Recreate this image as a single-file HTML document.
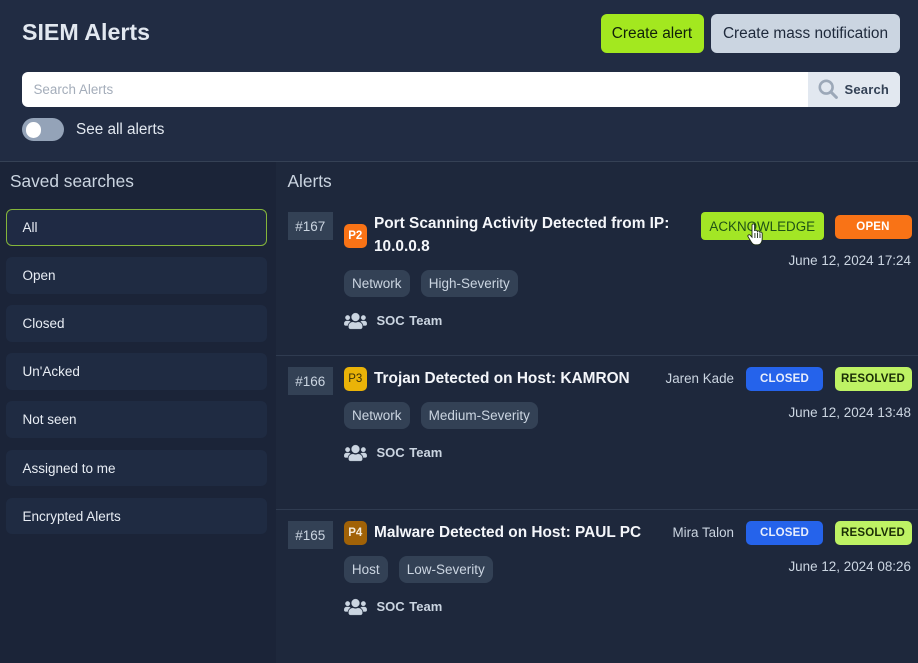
<!DOCTYPE html>
<html lang="en"><head><meta charset="utf-8"><title>SIEM Alerts</title>
<style>
*{box-sizing:border-box;margin:0;padding:0}
html,body{width:918px;height:663px;overflow:hidden;background:#1e283c;font-family:"Liberation Sans",Arial,sans-serif}
.a{position:absolute;white-space:nowrap}
.c{display:flex;align-items:center;justify-content:center}
.item{position:absolute;left:6px;width:261px;height:36.5px;background:#1f2b42;border-radius:6px;color:#e8edf4;font-size:13.5px;line-height:38px;padding-left:16.5px}
.id{position:absolute;left:287.5px;width:45.5px;height:28px;background:#334155;color:#cbd5e1;font-size:13.5px;display:flex;align-items:center;justify-content:center}
.pr{position:absolute;left:344px;width:22.5px;height:24px;border-radius:5px;font-size:11.5px;font-weight:bold;display:flex;align-items:center;justify-content:center}
.title{position:absolute;left:374px;color:#f4f6fa;font-size:15.4px;font-weight:bold;line-height:23px;white-space:nowrap}
.tag{position:absolute;height:27px;background:#334155;border-radius:8px;color:#cbd5e1;font-size:13.5px;line-height:27px;text-align:center}
.team{position:absolute;left:376.5px;color:#cbd5e1;font-size:13px;font-weight:bold;line-height:16px;word-spacing:1px;white-space:nowrap}
.ticon{position:absolute;left:344px;width:23px;height:18px;fill:#cbd5e1;stroke:#cbd5e1;stroke-width:10}
.st{position:absolute;height:24px;width:77px;border-radius:5px;font-size:11.5px;font-weight:bold;display:flex;align-items:center;justify-content:center;letter-spacing:.2px}
.date{position:absolute;right:7px;color:#cbd5e1;font-size:13.45px;line-height:16px;white-space:nowrap}
.who{position:absolute;right:184px;color:#cbd5e1;font-size:13.4px;line-height:16px;white-space:nowrap}
.line{position:absolute;left:276px;width:642px;height:1px;background:#2f3b50}
</style></head><body>
<div class="a" style="left:0;top:0;width:918px;height:161px;background:#212c43"></div>
<div class="a" style="left:0;top:162px;width:276px;height:501px;background:#1b2438"></div>
<div class="a" style="left:276px;top:162px;width:642px;height:501px;background:#1e283c"></div>
<div class="a" style="left:0;top:160.5px;width:918px;height:1.5px;background:#354155"></div>

<div class="a" style="left:22px;top:18px;font-size:23.2px;line-height:28px;font-weight:bold;color:#e2e8f0">SIEM Alerts</div>
<div class="a c" style="left:600.5px;top:14px;width:103px;height:39px;background:#a3e81f;border-radius:6px;font-size:15.4px;color:#10200a">Create alert</div>
<div class="a c" style="left:711px;top:14px;width:189px;height:39px;background:#cbd5e1;border-radius:6px;font-size:15.4px;color:#1e293b">Create mass notification</div>

<div class="a" style="left:22px;top:72px;width:878px;height:34.5px;background:#fff;border-radius:6px;overflow:hidden">
  <div class="a" style="left:11.5px;top:1px;line-height:34.5px;font-size:13.4px;color:#a4adba">Search Alerts</div>
  <div class="a" style="left:786px;top:0;width:92px;height:35px;background:#e2e8f0"></div>
  <svg class="a" style="left:796px;top:7px" width="20" height="20" viewBox="0 0 20 20"><circle cx="8.2" cy="8.2" r="6.4" fill="none" stroke="#9ca8b8" stroke-width="2.6"/><path d="M12.8 12.8L18.4 18.4" stroke="#9ca8b8" stroke-width="3" stroke-linecap="round"/></svg>
  <div class="a" style="left:822.5px;top:1px;line-height:34.5px;font-size:13px;font-weight:bold;color:#334155;letter-spacing:.2px">Search</div>
</div>

<div class="a" style="left:22px;top:118px;width:42px;height:23px;background:#94a3b8;border-radius:12px"></div>
<div class="a" style="left:25.5px;top:122px;width:15.5px;height:15.5px;background:#fff;border-radius:50%"></div>
<div class="a" style="left:76px;top:121px;font-size:15.3px;line-height:18px;color:#e2e8f0">See all alerts</div>

<div class="a" style="left:10px;top:171px;font-size:17.3px;line-height:21px;color:#cbd5e1">Saved searches</div>
<div class="a" style="left:287.5px;top:171px;font-size:17.3px;line-height:21px;color:#cbd5e1">Alerts</div>

<div class="item" style="top:209px;border:1px solid #84b53a;line-height:36px;padding-left:15.5px;background:#1f2a44">All</div>
<div class="item" style="top:257px">Open</div>
<div class="item" style="top:305px">Closed</div>
<div class="item" style="top:353px">Un'Acked</div>
<div class="item" style="top:401px">Not seen</div>
<div class="item" style="top:449.5px">Assigned to me</div>
<div class="item" style="top:497.5px">Encrypted Alerts</div>

<!-- Alert 167 -->
<div class="id" style="top:212px">#167</div>
<div class="pr" style="top:224px;background:#f97316;color:#fff">P2</div>
<div class="title" style="top:212px">Port Scanning Activity Detected from IP:<br>10.0.0.8</div>
<div class="tag" style="left:344px;top:270px;width:65.5px">Network</div>
<div class="tag" style="left:421px;top:270px;width:96.5px">High-Severity</div>
<svg class="ticon" style="top:311.5px" viewBox="0 0 640 512"><path d="M96 224c35.3 0 64-28.7 64-64s-28.7-64-64-64-64 28.7-64 64 28.7 64 64 64zm448 0c35.3 0 64-28.7 64-64s-28.7-64-64-64-64 28.7-64 64 28.7 64 64 64zm32 32h-64c-17.6 0-33.5 7.1-45.1 18.6 40.3 22.1 68.9 62 75.1 109.4h66c17.7 0 32-14.3 32-32v-32c0-35.3-28.7-64-64-64zm-256 0c61.9 0 112-50.1 112-112S381.9 32 320 32 208 82.1 208 144s50.1 112 112 112zm76.8 32h-8.3c-20.8 10-43.9 16-68.5 16s-47.6-6-68.5-16h-8.3C179.6 288 128 339.6 128 403.2V432c0 26.5 21.5 48 48 48h288c26.5 0 48-21.5 48-48v-28.8c0-63.6-51.6-115.2-115.2-115.2zm-223.7-13.4C161.5 263.1 145.6 256 128 256H64c-35.3 0-64 28.7-64 64v32c0 17.7 14.3 32 32 32h65.9c6.3-47.4 34.9-87.3 75.2-109.4z"/></svg>
<div class="team" style="top:313px">SOC Team</div>
<div class="a c" style="left:701px;top:212px;width:122.5px;height:28px;background:#a3e625;border-radius:4px;font-size:13.4px;color:#1f5216">ACKNOWLEDGE</div>
<div class="st" style="left:834.5px;top:214.5px;background:#f97316;color:#fff">OPEN</div>
<div class="date" style="top:253px">June 12, 2024 17:24</div>
<svg class="a" style="left:746px;top:222px" width="18" height="24" viewBox="0 0 18 24"><path d="M6 3.2C6 1.5 8.6 1.5 8.6 3.2V9C9 7.8 11.2 7.9 11.4 9.6 11.9 8.5 13.8 8.7 14 10.4 14.6 9.6 16.2 10 16.2 11.6V17C16.2 20 14.6 22.8 11.5 22.8H9.2C7 22.8 6 21.4 5 19.6L2.1 14.8C1.2 13.2 3 12 4.2 13.2L6 15.2Z" fill="#fff" stroke="#1b2a14" stroke-width=".9"/><path d="M8.9 11v5M11.5 11v5M14 11.5v4.5" stroke="#1b2a14" stroke-width=".9" fill="none"/></svg>
<div class="line" style="top:355px"></div>

<!-- Alert 166 -->
<div class="id" style="top:367px">#166</div>
<div class="pr" style="top:367px;background:#eab308;color:#3b2f0a;font-weight:normal">P3</div>
<div class="title" style="top:367px">Trojan Detected on Host: KAMRON</div>
<div class="tag" style="left:344px;top:402px;width:65.5px">Network</div>
<div class="tag" style="left:421px;top:402px;width:116.5px">Medium-Severity</div>
<svg class="ticon" style="top:443.5px" viewBox="0 0 640 512"><path d="M96 224c35.3 0 64-28.7 64-64s-28.7-64-64-64-64 28.7-64 64 28.7 64 64 64zm448 0c35.3 0 64-28.7 64-64s-28.7-64-64-64-64 28.7-64 64 28.7 64 64 64zm32 32h-64c-17.6 0-33.5 7.1-45.1 18.6 40.3 22.1 68.9 62 75.1 109.4h66c17.7 0 32-14.3 32-32v-32c0-35.3-28.7-64-64-64zm-256 0c61.9 0 112-50.1 112-112S381.9 32 320 32 208 82.1 208 144s50.1 112 112 112zm76.8 32h-8.3c-20.8 10-43.9 16-68.5 16s-47.6-6-68.5-16h-8.3C179.6 288 128 339.6 128 403.2V432c0 26.5 21.5 48 48 48h288c26.5 0 48-21.5 48-48v-28.8c0-63.6-51.6-115.2-115.2-115.2zm-223.7-13.4C161.5 263.1 145.6 256 128 256H64c-35.3 0-64 28.7-64 64v32c0 17.7 14.3 32 32 32h65.9c6.3-47.4 34.9-87.3 75.2-109.4z"/></svg>
<div class="team" style="top:445px">SOC Team</div>
<div class="who" style="top:371px">Jaren Kade</div>
<div class="st" style="left:746px;top:367px;background:#2563eb;color:#e8eefc">CLOSED</div>
<div class="st" style="left:834.5px;top:367px;background:#bef264;color:#1a2e05">RESOLVED</div>
<div class="date" style="top:405px">June 12, 2024 13:48</div>
<div class="line" style="top:509px"></div>

<!-- Alert 165 -->
<div class="id" style="top:521px">#165</div>
<div class="pr" style="top:521px;background:#a16207;color:#f3eadb">P4</div>
<div class="title" style="top:521px">Malware Detected on Host: PAUL PC</div>
<div class="tag" style="left:344px;top:556px;width:43.5px">Host</div>
<div class="tag" style="left:399px;top:556px;width:93.5px">Low-Severity</div>
<svg class="ticon" style="top:597.5px" viewBox="0 0 640 512"><path d="M96 224c35.3 0 64-28.7 64-64s-28.7-64-64-64-64 28.7-64 64 28.7 64 64 64zm448 0c35.3 0 64-28.7 64-64s-28.7-64-64-64-64 28.7-64 64 28.7 64 64 64zm32 32h-64c-17.6 0-33.5 7.1-45.1 18.6 40.3 22.1 68.9 62 75.1 109.4h66c17.7 0 32-14.3 32-32v-32c0-35.3-28.7-64-64-64zm-256 0c61.9 0 112-50.1 112-112S381.9 32 320 32 208 82.1 208 144s50.1 112 112 112zm76.8 32h-8.3c-20.8 10-43.9 16-68.5 16s-47.6-6-68.5-16h-8.3C179.6 288 128 339.6 128 403.2V432c0 26.5 21.5 48 48 48h288c26.5 0 48-21.5 48-48v-28.8c0-63.6-51.6-115.2-115.2-115.2zm-223.7-13.4C161.5 263.1 145.6 256 128 256H64c-35.3 0-64 28.7-64 64v32c0 17.7 14.3 32 32 32h65.9c6.3-47.4 34.9-87.3 75.2-109.4z"/></svg>
<div class="team" style="top:599px">SOC Team</div>
<div class="who" style="top:525px">Mira Talon</div>
<div class="st" style="left:746px;top:521px;background:#2563eb;color:#e8eefc">CLOSED</div>
<div class="st" style="left:834.5px;top:521px;background:#bef264;color:#1a2e05">RESOLVED</div>
<div class="date" style="top:559px">June 12, 2024 08:26</div>
</body></html>
